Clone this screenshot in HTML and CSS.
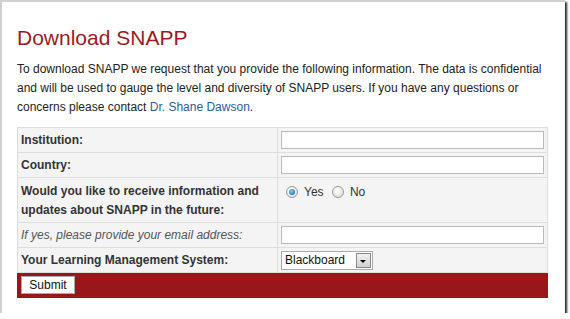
FILE: index.html
```html
<!DOCTYPE html>
<html lang="en">
<head>
    <meta charset="UTF-8">
    <title>Download SNAPP</title>
    <link rel="stylesheet" href="styles.css">
</head>
<body>
    <div class="frame">
        <h1>Download SNAPP</h1>
        <p class="intro">To download SNAPP we request that you provide the following information. The data is confidential and will be used to gauge the level and diversity of SNAPP users. If you have any questions or concerns please contact <a href="#">Dr. Shane Dawson</a>.</p>

        <table class="signup">
            <tr>
                <th>Institution:</th>
                <td><input type="text"></td>
            </tr>
            <tr>
                <th>Country:</th>
                <td><input type="text"></td>
            </tr>
            <tr class="tall">
                <th>Would you like to receive information and updates about SNAPP in the future:</th>
                <td>
                    <label class="radio"><span class="dot on"></span>Yes</label>
                    <label class="radio"><span class="dot"></span>No</label>
                </td>
            </tr>
            <tr>
                <th class="hint">If yes, please provide your email address:</th>
                <td><input type="text"></td>
            </tr>
            <tr>
                <th>Your Learning Management System:</th>
                <td>
                    <div class="select">
                        <span>Blackboard</span>
                        <span class="arrow"></span>
                    </div>
                </td>
            </tr>
            <tr class="submit-row">
                <td colspan="2"><button>Submit</button></td>
            </tr>
        </table>
    </div>
</body>
</html>
```

FILE: styles.css
```css
body { margin: 0; background: #fff; font-family: "Liberation Sans", Arial, sans-serif; }

.frame { width: 565px; height: 313px; box-sizing: border-box; border-left: 2px solid #d0d0d0; border-top: 2px solid #d0d0d0; padding: 0 0 0 15px; background: #fff; box-shadow: 2px 2px 2px rgba(0,0,0,0.85); }

h1 { margin: 0; padding-top: 23px; font-size: 21px; font-weight: normal; color: #9b1b1e; line-height: 26px; }

.intro { margin: 9px 0 0; font-size: 12px; line-height: 19px; color: #222; width: 532px; }
.intro a { color: #2a5c9a; text-decoration: none; }

.signup { margin-top: 10px; width: 531px; border-collapse: collapse; background: #f4f4f4; font-size: 12px; }
.signup tr { height: 25px; }
.signup .tall { height: 45px; }
.signup th, .signup td { border: 1px solid #dedede; padding: 0 3px; vertical-align: middle; }
.signup th { width: 253px; text-align: left; font-weight: bold; color: #333; line-height: 19px; }
.signup .tall th { padding: 3px 3px 2px; }
.signup .tall td { vertical-align: top; padding-top: 7px; }
.signup th.hint { font-weight: normal; font-style: italic; color: #555; }

.signup input { display: block; width: 263px; height: 18px; box-sizing: border-box; margin: 0; border: 1px solid #bbb; background: #fff; }

.radio { display: inline-flex; align-items: center; color: #333; margin: 0 5px 0 5px; }
.radio + .radio { margin-left: 0; }
.dot { width: 12px; height: 12px; border-radius: 50%; border: 1px solid #999; background: radial-gradient(circle at 40% 35%, #fff, #d8d8d8); margin-right: 6px; box-sizing: border-box; position: relative; }
.dot.on::after { content: ""; position: absolute; left: 2px; top: 2px; width: 6px; height: 6px; border-radius: 50%; background: radial-gradient(circle at 40% 35%, #7fd0ff, #0a5a9c); }

.select { display: flex; align-items: center; justify-content: space-between; width: 92px; height: 19px; box-sizing: border-box; border: 1px solid #aaa; background: #fff; padding-left: 3px; color: #111; font-size: 12px; }
.arrow { width: 15px; height: 15px; margin-right: 1px; border: 1px solid #888; box-sizing: border-box; background: linear-gradient(#f0f0f0, #d0d0d0); position: relative; }
.arrow::after { content: ""; position: absolute; left: 3px; top: 6px; border-left: 3px solid transparent; border-right: 3px solid transparent; border-top: 3px solid #000; }

.signup .submit-row td { background: #9a1619; border-color: #9a1619; padding: 0 3px; }
.submit-row button { display: block; font: 12px "Liberation Sans", Arial, sans-serif; color: #111; background: #fff; border: 1px solid #aaa; width: 54px; height: 18px; padding: 0; }
```
